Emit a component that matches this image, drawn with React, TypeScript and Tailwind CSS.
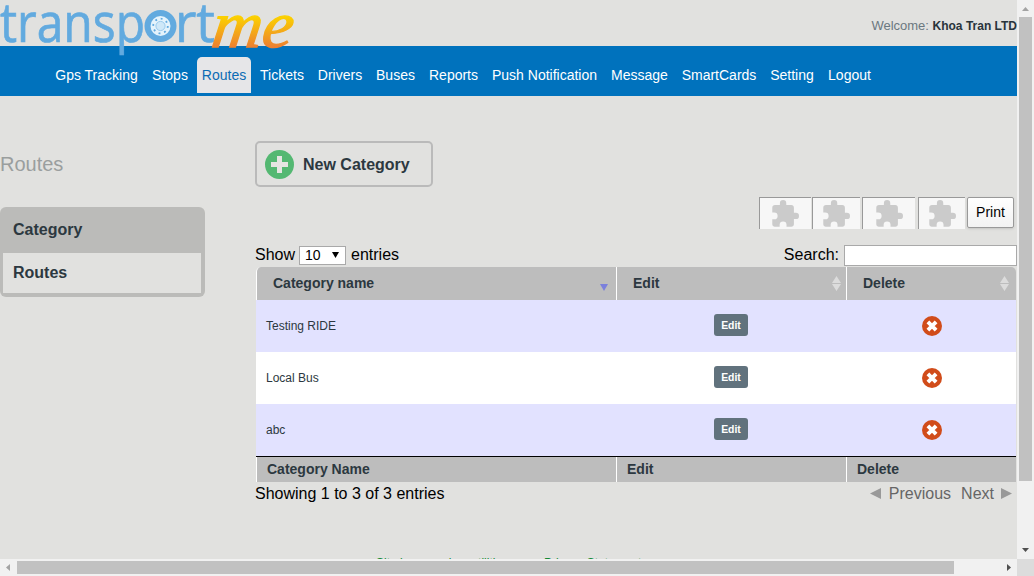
import React from "react";

const navItems = ["Gps Tracking", "Stops", "Routes", "Tickets", "Drivers", "Buses", "Reports", "Push Notification", "Message", "SmartCards", "Setting", "Logout"];
const navWidths = [97, 50, 54, 58, 58, 53, 63, 119, 71, 88, 58, 57];
const rows = ["Testing RIDE", "Local Bus", "abc"];

function Logo() {
  return (
    <svg className="absolute left-0 top-0 overflow-visible" width="300" height="62" viewBox="0 0 300 62">
      <defs>
        <linearGradient id="gold" gradientUnits="userSpaceOnUse" x1="0" y1="-30" x2="0" y2="0">
          <stop offset="0" stopColor="#fbd000" />
          <stop offset="1" stopColor="#ec8030" />
        </linearGradient>
      </defs>
      <g fill="#62aadf" stroke="#62aadf" strokeWidth="0.700" fontFamily="Open Sans" fontSize="54">
        <text x="0" y="42" textLength="145" lengthAdjust="spacingAndGlyphs">transp</text>
        <text x="175" y="42" textLength="40" lengthAdjust="spacingAndGlyphs">rt</text>
      </g>
      <circle cx="160.500" cy="26" r="16" fill="#62aadf" />
      <circle cx="160.500" cy="26" r="10" fill="#e4f3fc" />
      <circle cx="160.500" cy="26" r="7.300" fill="none" stroke="#62aadf" strokeWidth="1.800" strokeDasharray="1.900 3.830" />
      <circle cx="160.500" cy="26" r="4.600" fill="#cfe8f8" stroke="#8bc2e8" strokeWidth="0.800" />
      <text
        transform="translate(210 47) skewX(-8)"
        fill="url(#gold)"
        stroke="url(#gold)"
        strokeWidth="1.300"
        fontFamily="Liberation Serif"
        fontStyle="italic"
        fontSize="66"
        textLength="81"
        lengthAdjust="spacingAndGlyphs"
      >
        me
      </text>
    </svg>
  );
}

function Puzzle() {
  return (
    <svg className="mr-[1px]" width="28" height="28" viewBox="1 1 22 22" fill="#cbcbcb">
      <path d="M20.500 11H19V7c0-1.100-.9-2-2-2h-4V3.500a2.500 2.500 0 0 0-5 0V5H4c-1.100 0-2 .9-2 2v3.800h1.500a2.700 2.700 0 0 1 0 5.400H2V20c0 1.100.9 2 2 2h3.800v-1.500a2.700 2.700 0 0 1 5.400 0V22H17c1.100 0 2-.9 2-2v-4h1.500a2.500 2.500 0 0 0 0-5z" />
    </svg>
  );
}

function SortArrows() {
  return (
    <svg width="9" height="15" viewBox="0 0 9 15" fill="#dcdcdc">
      <path d="M0 7L4.500 0 9 7zM0 8h9L4.500 15z" />
    </svg>
  );
}

function DeleteIcon() {
  return (
    <svg width="20" height="20" viewBox="0 0 20 20">
      <circle cx="10" cy="10" r="10" fill="#d14c1a" />
      <path d="M5.900 5.900l8.200 8.200M14.100 5.900l-8.200 8.200" stroke="#fff" strokeWidth="3.900" />
    </svg>
  );
}

const grid = "grid grid-cols-[360px_230px_170px]";

export default function App() {
  return (
    <div className="flex h-[576px] w-[1034px] flex-col overflow-hidden bg-[#e1e1df] font-['Liberation_Sans',Arial,sans-serif] text-black">
      <div className="flex h-[559px]">
        <div className="relative flex h-[559px] w-[1017px] flex-col overflow-hidden">
          <header className="h-[46px] shrink-0 pt-[18px] text-right text-[13px] leading-4 whitespace-nowrap text-[#6b7880]">
            Welcome: <b className="text-[12px] text-[#29343c]">Khoa Tran LTD</b>
          </header>
          <nav className="flex h-[50px] shrink-0 bg-[#0072bd] pl-12 pt-[11px] text-sm text-white">
            {navItems.map((item, i) => (
              <a
                key={item}
                style={{ width: navWidths[i] }}
                className={
                  item === "Routes"
                    ? "mx-[2px] flex h-9 shrink-0 items-center justify-center rounded-t-[5px] bg-[#e6e6e8] whitespace-nowrap text-[#0c6cb4]"
                    : "flex h-9 shrink-0 items-center justify-center whitespace-nowrap"
                }
              >
                {item}
              </a>
            ))}
          </nav>
          <Logo />

          <div className="flex h-[463px] shrink-0">
            <aside className="w-[255px] shrink-0 pt-[55px]">
              <h1 className="h-[26px] text-xl leading-[26px] text-[#9a9e9e]">Routes</h1>
              <div className="mt-[30px] h-[90px] w-[205px] rounded-md bg-[#bbbbb9] text-base font-bold text-[#2c3840]">
                <div className="h-[46px] pl-[13px] leading-[45px]">Category</div>
                <div className="mr-1 ml-[3px] h-10 bg-[#e1e1df] pl-[10px] leading-[39px]">Routes</div>
              </div>
            </aside>

            <main className="flex w-[762px] flex-col pt-[45px]">
              <button className="flex h-[46px] w-[178px] shrink-0 items-center rounded-[5px] border-2 border-[#bababa] pl-2 text-base font-bold text-[#2c3840]">
                <svg width="29" height="29" viewBox="0 0 29 29">
                  <circle cx="14.500" cy="14.500" r="14.500" fill="#54b872" />
                  <path d="M14.500 6v17M6 14.500h17" stroke="#e5e5e2" strokeWidth="5" />
                </svg>
                <span className="ml-[9px] pt-[2px]">New Category</span>
              </button>

              <div className="mt-[10px] flex h-[32px] shrink-0 justify-end pr-[3px]">
                <div className="mr-[1px] flex h-[32px] w-[52px] items-center justify-center border-t border-l border-[#999] bg-[#f7f7f7]"><Puzzle /></div>
                <div className="mr-[2px] flex h-[32px] w-[48px] items-center justify-center border-t border-l border-[#999] bg-[#f7f7f7]"><Puzzle /></div>
                <div className="mr-[3px] flex h-[32px] w-[53px] items-center justify-center border-t border-l border-[#999] bg-[#f7f7f7]"><Puzzle /></div>
                <div className="mr-[2px] flex h-[32px] w-[47px] items-center justify-center border-t border-l border-[#999] bg-[#f7f7f7]"><Puzzle /></div>
                <button className="h-[31px] w-[47px] rounded-[2px] border border-[#999] bg-linear-to-b from-white to-[#f2f2f2] pb-[2px] text-sm shadow-sm">Print</button>
              </div>

              <div className="flex h-[38px] shrink-0 items-end text-base">
                <div className="mb-[1px] flex h-[22px] items-center whitespace-nowrap">
                  Show
                  <span className="mt-[1px] mr-[5px] ml-1 flex h-[19px] w-[47px] items-center justify-between border border-[#a9a9a9] bg-white pr-[6px] pl-[5px] text-sm leading-[17px]">
                    10
                    <svg className="mb-px" width="7" height="6" viewBox="0 0 7 6"><path d="M0 0h7L3.500 6z" /></svg>
                  </span>
                  entries
                </div>
                <div className="ml-auto flex h-[22px] items-end">
                  <span className="mr-[5px] h-[22px] leading-[20px]">Search:</span>
                  <input className="mb-[1px] h-[21px] w-[173px] border border-[#a9a9a9] bg-white" />
                </div>
              </div>

              <div className="ml-[1px] w-[760px] shrink-0 text-[#2c3840]">
                <div className={grid + " h-[33px] text-sm font-bold leading-[33px]"}>
                  <div className="flex rounded-tl-[5px] border-l border-white bg-[#bdbdbd] pr-2 pl-4">
                    Category name
                    <svg className="mt-[17px] ml-auto" width="8" height="7" viewBox="0 0 8 7"><path d="M0 0h8L4 7z" fill="#7b80dc" /></svg>
                  </div>
                  <div className="flex items-center justify-between border-l border-white bg-[#bdbdbd] pr-[5px] pl-4">Edit<SortArrows /></div>
                  <div className="flex items-center justify-between rounded-tr-[5px] border-l border-white bg-[#bdbdbd] pr-[7px] pl-4">Delete<SortArrows /></div>
                </div>
                {rows.map((row, i) => (
                  <div key={row} className={grid + " h-[52px] text-xs " + (i % 2 ? "bg-white" : "bg-[#e2e2ff]")}>
                    <div className="pl-[10px] leading-[52px]">{row}</div>
                    <div className="pt-[14px] text-center">
                      <button className="h-[22px] w-[34px] rounded-[3px] bg-[#61727d] pt-px text-[10.4px] font-bold text-white">Edit</button>
                    </div>
                    <div className="flex items-center justify-center pl-[2px]"><DeleteIcon /></div>
                  </div>
                ))}
                <div className={grid + " h-[26px] border-t border-black text-sm font-bold leading-[25px]"}>
                  <div className="border-l border-white bg-[#bdbdbd] pl-[10px]">Category Name</div>
                  <div className="border-l border-white bg-[#bdbdbd] pl-[10px]">Edit</div>
                  <div className="border-l border-white bg-[#bdbdbd] pl-[10px]">Delete</div>
                </div>
              </div>

              <div className="flex h-[23px] shrink-0 items-center text-base">
                Showing 1 to 3 of 3 entries
                <div className="ml-auto flex items-center pr-[4px] text-[#666]">
                  <svg className="mr-[7px]" width="12" height="12" viewBox="0 0 12 12"><path d="M0 5.500L11 0v11z" fill="#999" /></svg>
                  Previous
                  <span className="ml-[10px]">Next</span>
                  <svg className="ml-[7px]" width="12" height="12" viewBox="0 0 12 12"><path d="M11 5.500L0 0v11z" fill="#999" /></svg>
                </div>
              </div>

              <footer className="mt-[50px] ml-[121px] flex h-4 shrink-0 gap-4 text-xs leading-4 whitespace-nowrap text-[#128a35]">
                <span className="w-[152px]">Site by some bus utilities</span>
                <span>Privacy Statement</span>
              </footer>
            </main>
          </div>
        </div>

        <div className="flex w-[17px] flex-col items-center bg-[#f1f1f1]">
          <svg width="17" height="17" viewBox="0 0 17 17"><path d="M5 11h7L8.500 7z" fill="#a3a3a3" /></svg>
          <div className="h-[464px] w-[13px] bg-[#c1c1c1]" />
          <svg className="mt-auto" width="17" height="17" viewBox="0 0 17 17"><path d="M5 6h7L8.500 10z" fill="#505050" /></svg>
        </div>
      </div>

      <div className="flex h-[17px]">
        <div className="flex w-[1017px] items-center bg-[#f1f1f1]">
          <svg width="17" height="17" viewBox="0 0 17 17"><path d="M10 5v7L6 8.500z" fill="#a3a3a3" /></svg>
          <div className="h-[13px] w-[937px] bg-[#c1c1c1]" />
          <svg className="ml-auto" width="17" height="17" viewBox="0 0 17 17"><path d="M7 5v7l4-3.500z" fill="#505050" /></svg>
        </div>
        <div className="w-[17px] bg-[#dcdcdc]" />
      </div>
    </div>
  );
}
